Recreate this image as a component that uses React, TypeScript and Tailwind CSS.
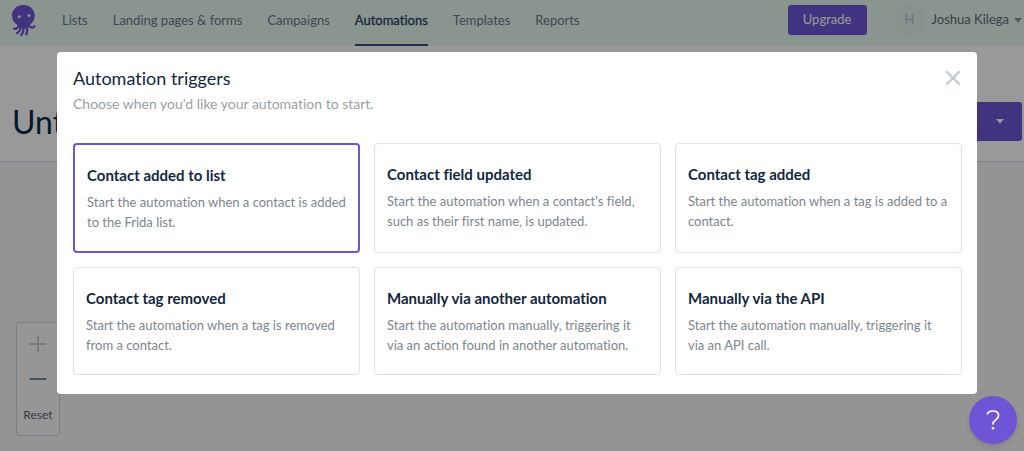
import { Minus, Plus, X } from 'lucide-react'
import clsx from 'clsx'

const navItems = ['Lists', 'Landing pages & forms', 'Campaigns', 'Automations', 'Templates', 'Reports']

const triggers = [
  { title: 'Contact added to list', text: 'Start the automation when a contact is added to the Frida list.' },
  { title: 'Contact field updated', text: "Start the automation when a contact's field, such as their first name, is updated." },
  { title: 'Contact tag added', text: 'Start the automation when a tag is added to a contact.' },
  { title: 'Contact tag removed', text: 'Start the automation when a tag is removed from a contact.' },
  { title: 'Manually via another automation', text: 'Start the automation manually, triggering it via an action found in another automation.' },
  { title: 'Manually via the API', text: 'Start the automation manually, triggering it via an API call.' },
]

const Logo = () => (
  <svg viewBox="0 0 26 34" className="h-[34px] w-[26px]" aria-hidden="true">
    <g fill="none" stroke="#6f55d6" strokeLinecap="round">
      <path d="M18 20.500c1.500 2.500 4.500 3 5.500.8" strokeWidth="2.200" />
      <path d="M8 20.500c-1.500 3.200-3 3.700-5.200 3.200" strokeWidth="2.200" />
      <path d="M10 22c-.8 3.500-2 5.200-4 6" strokeWidth="2.200" />
      <path d="M12.500 22c0 4-.8 6.500-2.200 8" strokeWidth="2.400" />
      <path d="M15.500 22c1.200 3 .9 5-.2 7.200" strokeWidth="2.400" />
    </g>
    <path d="M12.300 0C5.600 0 1 4.700 1 10.700c0 4.200 2 6.800 4.800 8.800 1.700 1.300 1.700 2.500 2 4h9.600c.2-2.500 1-3.300 2.600-4.700 2.300-2 3.700-4.600 3.700-8C23.700 4.700 19.200 0 12.300 0Z" fill="#6f55d6" />
    <circle cx="8.200" cy="11.800" r="1.500" fill="#e6f8ee" />
    <circle cx="18" cy="10.500" r="1.500" fill="#e6f8ee" />
  </svg>
)

const Caret = ({ className }: { className?: string }) => (
  <svg viewBox="0 0 8 5" className={clsx('h-[5px] w-2', className)} fill="currentColor" aria-hidden="true">
    <path d="M0 0h8L4 4.500Z" />
  </svg>
)

const Header = () => (
  <header className="flex h-[46px] items-stretch bg-[#e6f8ee] pl-[11px] pr-[2px]">
    <a href="#" aria-label="Home" className="mr-[25px] pt-[5px]">
      <Logo />
    </a>
    <nav className="flex gap-[25px] text-[13px]">
      {navItems.map((item) => (
        <a
          key={item}
          href="#"
          className={clsx(
            'flex items-center border-b-2 pb-[5px] pt-[3px]',
            item === 'Automations' ? 'border-[#34507a] text-[#2b4468] [-webkit-text-stroke:0.3px]' : 'border-transparent text-[#69788e]'
          )}
        >
          {item}
        </a>
      ))}
    </nav>
    <div className="ml-auto flex items-center pb-[6px] text-[13px]">
      <button className="h-[30px] w-[79px] rounded-[3px] bg-[#6f55d6] text-white">Upgrade</button>
      <button className="ml-7 flex items-center text-[#5c6b82]">
        <span className="mr-[7px] flex size-[30px] items-center justify-center rounded-full bg-[#e2f3ea] text-[#b4c2cd]">H</span>
        Joshua Kilega
        <Caret className="ml-[5px] text-[#8494a5]" />
      </button>
    </div>
  </header>
)

const Modal = () => (
  <div className="fixed inset-0 flex items-start bg-black/40 pl-[57px] pr-[47px] pt-[52px]">
    <div role="dialog" aria-modal="true" aria-labelledby="modal-title" className="w-full rounded-[4px] bg-white pb-[19px] pl-4 pr-[15px] pt-[14px]">
      <div className="flex items-start justify-between">
        <div>
          <h2 id="modal-title" className="text-lg leading-6 text-[#14273e]">Automation triggers</h2>
          <p className="mt-[3px] text-sm leading-[22px] text-[#9b9fa4]">Choose when you'd like your automation to start.</p>
        </div>
        <button aria-label="Close" className="-mr-[3px] text-[#c3c9d2]">
          <X className="size-6" strokeWidth={2.4} />
        </button>
      </div>

      <div className="mt-7 grid grid-cols-3 gap-[14px]">
        {triggers.map((trigger, i) => (
          <button
            key={trigger.title}
            className={clsx(
              'flex flex-col rounded-[4px] px-3 pb-[19px] pt-5 text-left',
              i === 0 ? 'border-2 border-[#6f55d6]' : 'border border-[#dfe3ea]'
            )}
          >
            <span className="text-[15px] font-bold leading-5 text-[#14273e]">{trigger.title}</span>
            <span className="mt-[7px] text-[13px] leading-5 text-[#7d868f]">{trigger.text}</span>
          </button>
        ))}
      </div>
    </div>
  </div>
)

const App = () => {
  return (
    <div className="min-h-screen bg-[#f7f7f7] font-['Lato',sans-serif] [font-variant-ligatures:no-common-ligatures]">
      <Header />

      {/* Title bar */}
      <div className="flex h-[116px] items-center justify-between border-b border-[#d3d8e4] bg-white pl-3 pr-[2px] pt-[36px]">
        <h1 className="text-[32px] leading-10 text-[#0d2a4a]">Unt</h1>
        <button aria-label="More options" className="flex h-[39px] w-[60px] items-center justify-end rounded-[3px] bg-[#6f55d6] pr-[18px] text-white">
          <Caret />
        </button>
      </div>

      {/* Canvas zoom controls */}
      <div className="px-4 pt-[160px]">
        <div className="flex h-[114px] w-[44px] flex-col items-center rounded-[3px] border border-[#cdd6df] bg-[#fbfbfb] pt-[8px] text-[#6d8595]">
          <button aria-label="Zoom in" className="text-[#c2ccd3]">
            <Plus className="size-[26px]" strokeWidth={1.8} />
          </button>
          <button aria-label="Zoom out" className="mt-[9px]">
            <Minus className="size-[26px]" strokeWidth={1.8} />
          </button>
          <button className="mt-[15px] text-xs leading-4 text-[#5c656c]">Reset</button>
        </div>
      </div>

      <Modal />

      <button
        aria-label="Help"
        className="fixed bottom-[7px] right-[7px] flex size-[48px] items-center justify-center rounded-full bg-[#6f55d6] text-white shadow-md"
      >
        <svg viewBox="0 0 14 20" className="h-5 w-[14px]" fill="none" stroke="currentColor" strokeWidth="1.700" aria-hidden="true">
          <path d="M1.200 4.500C1.800 2.300 4 1 6.800 1c3.400 0 5.800 1.800 5.800 4.600 0 4.200-5.600 4.200-5.600 8.200v.7" />
          <circle cx="7" cy="18.300" r="1.300" fill="currentColor" stroke="none" />
        </svg>
      </button>
    </div>
  )
}

export default App
